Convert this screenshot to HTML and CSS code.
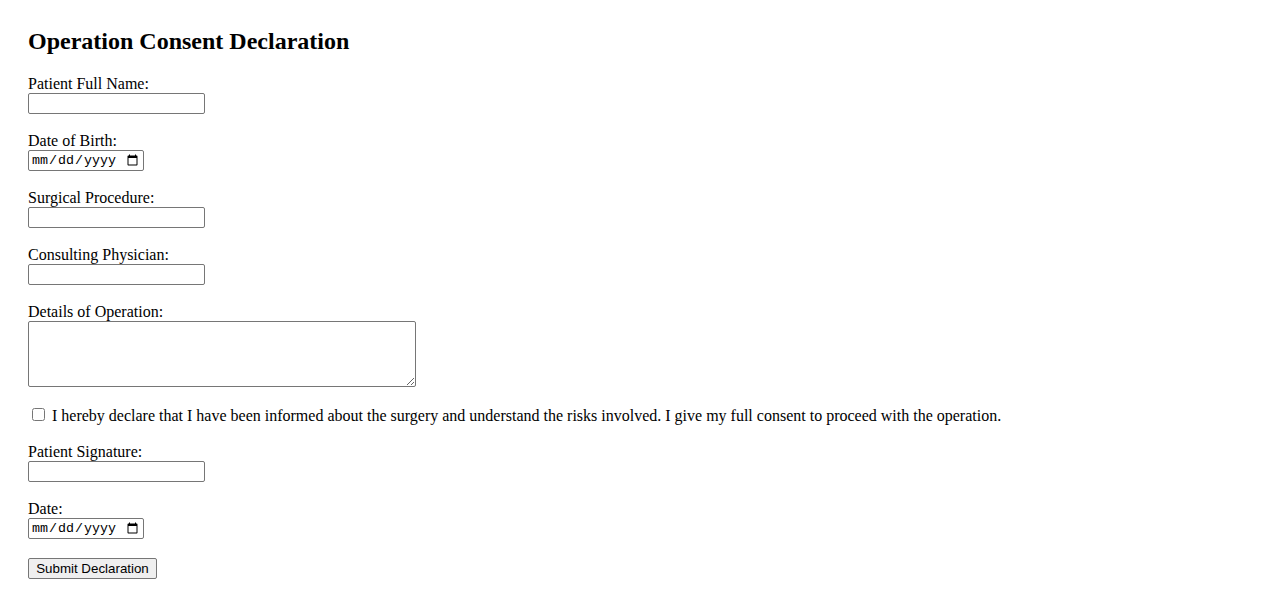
FILE: index.html
```html
<!DOCTYPE html>
<html lang="en">
<head>
<meta charset="utf-8">
<title>Operation Consent Declaration</title>
<link rel="stylesheet" href="styles.css">
</head>
<body>
<h2 class="title">Operation Consent Declaration</h2>
<form class="form">
  <div class="field">
    <label for="name">Patient Full Name:</label>
    <input class="text-input" type="text" id="name">
  </div>
  <div class="field">
    <label for="dob">Date of Birth:</label>
    <input class="date-input" type="date" id="dob">
  </div>
  <div class="field">
    <label for="procedure">Surgical Procedure:</label>
    <input class="text-input" type="text" id="procedure">
  </div>
  <div class="field">
    <label for="physician">Consulting Physician:</label>
    <input class="text-input" type="text" id="physician">
  </div>
  <div class="field">
    <label for="details">Details of Operation:</label>
    <textarea class="textarea" id="details" rows="4" cols="50"></textarea>
  </div>
  <div class="consent">
    <input class="checkbox" type="checkbox" id="consent">
    <label class="consent-label" for="consent">I hereby declare that I have been informed about the surgery and understand the risks involved. I give my full consent to proceed with the operation.</label>
  </div>
  <div class="field">
    <label for="signature">Patient Signature:</label>
    <input class="text-input" type="text" id="signature">
  </div>
  <div class="field">
    <label for="date">Date:</label>
    <input class="date-input" type="date" id="date">
  </div>
  <div class="actions">
    <button class="submit" type="submit">Submit Declaration</button>
  </div>
</form>
</body>
</html>
```
FILE: styles.css
```css
html, body {
  background: #ffffff;
}

body {
  margin: 0;
  padding: 28px;
  font-family: "Liberation Serif", "Times New Roman", serif;
  font-size: 16px;
  color: #000000;
}

.title {
  margin: 0 0 20px 0;
  font-size: 24px;
  font-weight: bold;
  line-height: 27px;
}

.form {
  display: flex;
  flex-direction: column;
  align-items: flex-start;
  gap: 18px;
}

.field {
  display: flex;
  flex-direction: column;
  align-items: flex-start;
}

.field label {
  line-height: 18px;
}

.text-input,
.date-input,
.textarea,
.submit {
  box-sizing: border-box;
  margin: 0;
  border: 1px solid #767676;
  border-radius: 2px;
  background: #ffffff;
  color: #000000;
}

.text-input {
  width: 177px;
  height: 21px;
  padding: 1px 2px;
  font-family: "Liberation Sans", Arial, sans-serif;
  font-size: 13.333px;
}

.date-input {
  width: 116px;
  height: 21px;
  padding: 1px 2px;
  font-family: "Liberation Mono", "Courier New", monospace;
  font-size: 13.333px;
}

.textarea {
  width: 388px;
  height: 66px;
  padding: 2px;
  font-family: "Liberation Mono", monospace;
  font-size: 13.333px;
  resize: both;
}

.consent {
  display: flex;
  align-items: flex-start;
  height: 20px;
}

.checkbox {
  width: 13px;
  height: 13px;
  margin: 3px 3px 3px 4px;
}

.consent-label {
  margin-left: 4px;
  line-height: 18px;
  padding-top: 2px;
}

.actions {
  margin-top: 1px;
}

.submit {
  width: 129px;
  height: 21px;
  padding: 1px 6px;
  background: #efefef;
  font-family: "Liberation Sans", Arial, sans-serif;
  font-size: 13.333px;
}
```
